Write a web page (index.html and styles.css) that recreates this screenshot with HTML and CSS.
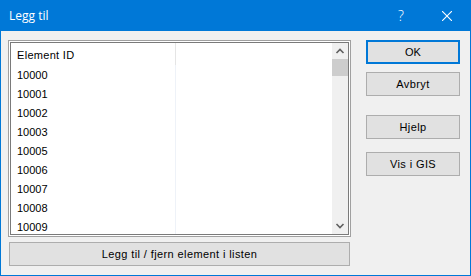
FILE: index.html
```html
<!DOCTYPE html>
<html lang="no">
<head>
  <meta charset="UTF-8">
  <title>Legg til</title>
  <link rel="stylesheet" href="styles.css">
</head>
<body>

  <div class="window">
    <div class="titlebar">
      <div class="title">Legg til</div>
      <div class="caption-btn help">?</div>
      <div class="caption-btn close">
        <svg width="10" height="10" viewBox="0 0 10 10">
          <path d="M0 0 L10 10 M10 0 L0 10" stroke="#fff" stroke-width="1.1" fill="none"/>
        </svg>
      </div>
    </div>

    <div class="content">
      <div class="left">
        <div class="listbox">
          <div class="list-inner">
            <div class="grid">
              <div class="row header">
                <div class="cell">Element ID</div>
                <div class="cell rest"></div>
              </div>
              <div class="row"><div class="cell">10000</div><div class="cell rest"></div></div>
              <div class="row"><div class="cell">10001</div><div class="cell rest"></div></div>
              <div class="row"><div class="cell">10002</div><div class="cell rest"></div></div>
              <div class="row"><div class="cell">10003</div><div class="cell rest"></div></div>
              <div class="row"><div class="cell">10005</div><div class="cell rest"></div></div>
              <div class="row"><div class="cell">10006</div><div class="cell rest"></div></div>
              <div class="row"><div class="cell">10007</div><div class="cell rest"></div></div>
              <div class="row"><div class="cell">10008</div><div class="cell rest"></div></div>
              <div class="row"><div class="cell">10009</div><div class="cell rest"></div></div>
              <div class="row filler"><div class="cell"></div><div class="cell rest"></div></div>
            </div>
            <div class="scrollbar">
              <div class="arrow">
                <svg width="16" height="16" viewBox="0 0 16 16">
                  <path d="M4.5 10 L8 6.5 L11.5 10" stroke="#606060" stroke-width="1.6" fill="none"/>
                </svg>
              </div>
              <div class="thumb"></div>
              <div class="track"></div>
              <div class="arrow">
                <svg width="16" height="16" viewBox="0 0 16 16">
                  <path d="M4.5 6 L8 9.5 L11.5 6" stroke="#606060" stroke-width="1.6" fill="none"/>
                </svg>
              </div>
            </div>
          </div>
        </div>
        <button class="btn wide">Legg til / fjern element i listen</button>
      </div>

      <div class="right">
        <button class="btn default">OK</button>
        <button class="btn cancel">Avbryt</button>
        <button class="btn help-btn">Hjelp</button>
        <button class="btn gis">Vis i GIS</button>
      </div>
    </div>
  </div>

</body>
</html>
```

FILE: styles.css
```css
body {
  margin: 0;
  font-family: "Liberation Sans", Arial, sans-serif;
  font-size: 11px;
  background-color: #f0f0f0;
}

.window {
  width: 471px;
  height: 276px;
  box-sizing: border-box;
  border: 1px solid #0078d7;
  background-color: #f0f0f0;
  overflow: hidden;
}

.titlebar {
  height: 30px;
  background-color: #0078d7;
  color: #fff;
  display: flex;
  align-items: center;
}

.title {
  flex: 1;
  padding-left: 8px;
  font-family: "Open Sans", "Noto Sans", sans-serif;
  font-size: 12px;
  padding-bottom: 1px;
}

.caption-btn {
  width: 46px;
  height: 30px;
  display: flex;
  align-items: center;
  justify-content: center;
}

.help {
  font-family: "Open Sans", "Noto Sans", sans-serif;
  font-size: 14px;
  font-weight: 300;
  padding-bottom: 1px;
}

.close svg {
  display: block;
}

.content {
  display: flex;
  padding: 9px 0 0 7px;
}

.left {
  width: 343px;
  display: flex;
  flex-direction: column;
}

.listbox {
  height: 197px;
  box-sizing: border-box;
  border: 1px solid #a0a0a0;
  padding: 1px;
  background-color: #fff;
}

.list-inner {
  height: 100%;
  box-sizing: border-box;
  border: 1px solid #7a7a7a;
  display: flex;
  overflow: hidden;
}

.grid {
  flex: 1;
  background-color: #fff;
  overflow: hidden;
}

.row {
  display: flex;
  height: 19px;
  box-sizing: border-box;
  padding-top: 2px;
  line-height: 17px;
  color: #000;
}

.row.header {
  height: 22px;
  line-height: 20px;
  letter-spacing: 0.3px;
}

.row.filler {
  height: 40px;
}

.cell {
  width: 158px;
  padding-left: 6px;
  border-right: 1px solid #eef2f8;
  white-space: nowrap;
  margin-top: -2px;
  padding-top: 2px;
}

.header .cell {
  border-right-color: #e5e5e5;
}

.cell.rest {
  flex: 1;
  border-right: none;
}

.scrollbar {
  width: 16px;
  background-color: #f0f0f0;
  display: flex;
  flex-direction: column;
}

.arrow {
  height: 16px;
}

.arrow svg {
  display: block;
}

.thumb {
  height: 17px;
  background-color: #cdcdcd;
}

.track {
  flex: 1;
}

.btn {
  font-family: "Liberation Sans", Arial, sans-serif;
  font-size: 11px;
  letter-spacing: 0.4px;
  color: #000;
  background-color: #e1e1e1;
  border: 1px solid #adadad;
  height: 24px;
  padding: 0;
  margin: 0;
}

.wide {
  width: 341px;
  margin: 5px 0 0 1px;
}

.right {
  display: flex;
  flex-direction: column;
  margin-left: 15px;
}

.right .btn {
  width: 94px;
}

.default {
  border: 2px solid #0078d7;
  letter-spacing: 0;
}

.cancel {
  margin-top: 8px;
}

.help-btn {
  margin-top: 19px;
}

.gis {
  margin-top: 13px;
}
```
